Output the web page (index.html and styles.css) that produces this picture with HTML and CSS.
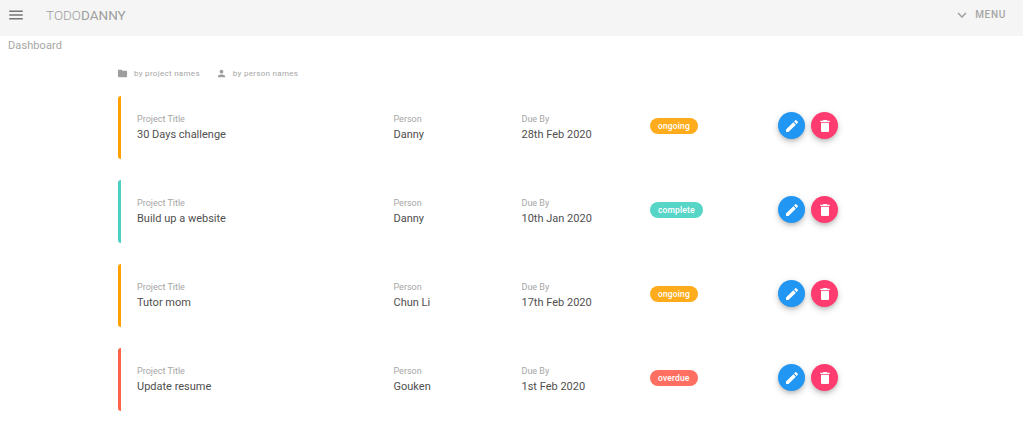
FILE: index.html
```html
<!DOCTYPE html>
<html lang="en">
<head>
    <meta charset="UTF-8">
    <title>TodoDanny</title>
    <link rel="stylesheet" href="styles.css">
</head>
<body>
    <!-- Toolbar -->
    <header class="toolbar">
        <svg class="menu-icon" viewBox="0 0 24 24"><path d="M3 18h18v-2H3v2zm0-5h18v-2H3v2zm0-7v2h18V6H3z"/></svg>
        <div class="brand"><span class="brand-light">TODO</span><span>DANNY</span></div>
        <div class="menu-btn">
            <svg class="chevron" viewBox="0 0 24 24"><path d="M7.41 8.59 12 13.17l4.59-4.58L18 10l-6 6-6-6z"/></svg>
            <span>MENU</span>
        </div>
    </header>

    <p class="page-title">Dashboard</p>

    <main class="container">
        <div class="filters">
            <div class="filter">
                <svg viewBox="0 0 24 24"><path d="M10 4H4c-1.1 0-2 .9-2 2v12c0 1.1.9 2 2 2h16c1.1 0 2-.9 2-2V8c0-1.1-.9-2-2-2h-8l-2-2z"/></svg>
                <span>by project names</span>
            </div>
            <div class="filter">
                <svg viewBox="0 0 24 24"><path d="M12 12c2.21 0 4-1.79 4-4s-1.79-4-4-4-4 1.79-4 4 1.79 4 4 4zm0 2c-2.67 0-8 1.34-8 4v2h16v-2c0-2.66-5.33-4-8-4z"/></svg>
                <span>by person names</span>
            </div>
        </div>

        <!-- Projects -->
        <div class="project ongoing">
            <div class="col"><div class="label">Project Title</div><div class="value">30 Days challenge</div></div>
            <div class="col"><div class="label">Person</div><div class="value">Danny</div></div>
            <div class="col"><div class="label">Due By</div><div class="value">28th Feb 2020</div></div>
            <div class="status"><span class="chip">ongoing</span></div>
            <div class="actions">
                <button class="fab edit"><svg viewBox="0 0 24 24"><path d="M3 17.25V21h3.75L17.81 9.94l-3.75-3.75L3 17.25zM20.71 7.04c.39-.39.39-1.02 0-1.41l-2.34-2.34c-.39-.39-1.02-.39-1.41 0l-1.83 1.83 3.75 3.75 1.83-1.83z"/></svg></button>
                <button class="fab delete"><svg viewBox="0 0 24 24"><path d="M6 19c0 1.1.9 2 2 2h8c1.1 0 2-.9 2-2V7H6v12zM19 4h-3.5l-1-1h-5l-1 1H5v2h14V4z"/></svg></button>
            </div>
        </div>

        <div class="project complete">
            <div class="col"><div class="label">Project Title</div><div class="value">Build up a website</div></div>
            <div class="col"><div class="label">Person</div><div class="value">Danny</div></div>
            <div class="col"><div class="label">Due By</div><div class="value">10th Jan 2020</div></div>
            <div class="status"><span class="chip">complete</span></div>
            <div class="actions">
                <button class="fab edit"><svg viewBox="0 0 24 24"><path d="M3 17.25V21h3.75L17.81 9.94l-3.75-3.75L3 17.25zM20.71 7.04c.39-.39.39-1.02 0-1.41l-2.34-2.34c-.39-.39-1.02-.39-1.41 0l-1.83 1.83 3.75 3.75 1.83-1.83z"/></svg></button>
                <button class="fab delete"><svg viewBox="0 0 24 24"><path d="M6 19c0 1.1.9 2 2 2h8c1.1 0 2-.9 2-2V7H6v12zM19 4h-3.5l-1-1h-5l-1 1H5v2h14V4z"/></svg></button>
            </div>
        </div>

        <div class="project ongoing">
            <div class="col"><div class="label">Project Title</div><div class="value">Tutor mom</div></div>
            <div class="col"><div class="label">Person</div><div class="value">Chun Li</div></div>
            <div class="col"><div class="label">Due By</div><div class="value">17th Feb 2020</div></div>
            <div class="status"><span class="chip">ongoing</span></div>
            <div class="actions">
                <button class="fab edit"><svg viewBox="0 0 24 24"><path d="M3 17.25V21h3.75L17.81 9.94l-3.75-3.75L3 17.25zM20.71 7.04c.39-.39.39-1.02 0-1.41l-2.34-2.34c-.39-.39-1.02-.39-1.41 0l-1.83 1.83 3.75 3.75 1.83-1.83z"/></svg></button>
                <button class="fab delete"><svg viewBox="0 0 24 24"><path d="M6 19c0 1.1.9 2 2 2h8c1.1 0 2-.9 2-2V7H6v12zM19 4h-3.5l-1-1h-5l-1 1H5v2h14V4z"/></svg></button>
            </div>
        </div>

        <div class="project overdue">
            <div class="col"><div class="label">Project Title</div><div class="value">Update resume</div></div>
            <div class="col"><div class="label">Person</div><div class="value">Gouken</div></div>
            <div class="col"><div class="label">Due By</div><div class="value">1st Feb 2020</div></div>
            <div class="status"><span class="chip">overdue</span></div>
            <div class="actions">
                <button class="fab edit"><svg viewBox="0 0 24 24"><path d="M3 17.25V21h3.75L17.81 9.94l-3.75-3.75L3 17.25zM20.71 7.04c.39-.39.39-1.02 0-1.41l-2.34-2.34c-.39-.39-1.02-.39-1.41 0l-1.83 1.83 3.75 3.75 1.83-1.83z"/></svg></button>
                <button class="fab delete"><svg viewBox="0 0 24 24"><path d="M6 19c0 1.1.9 2 2 2h8c1.1 0 2-.9 2-2V7H6v12zM19 4h-3.5l-1-1h-5l-1 1H5v2h14V4z"/></svg></button>
            </div>
        </div>
    </main>
</body>
</html>
```

FILE: styles.css
```css
/* General Styles */
html, body {
    height: 441px;
    overflow: hidden;
}

body {
    font-family: Roboto, sans-serif;
    margin: 0;
    background: #fff;
    color: #424242;
}

/* Toolbar */
.toolbar {
    display: flex;
    align-items: center;
    height: 36px;
    padding: 0 17px 7px 7px;
    box-sizing: border-box;
    background: #f5f5f5;
}

.menu-icon {
    width: 18px;
    height: 18px;
    fill: #757575;
}

.brand {
    margin-left: 21px;
    font-size: 13.5px;
    font-weight: 400;
    color: #9e9e9e;
}

.brand-light {
    font-weight: 300;
}

.menu-btn {
    display: flex;
    align-items: center;
    gap: 4px;
    margin-left: auto;
    font-size: 10px;
    font-weight: 500;
    letter-spacing: 0.7px;
    color: #a6a6a6;
}

.chevron {
    width: 18px;
    height: 18px;
    fill: #9e9e9e;
}

.page-title {
    margin: 3px 0 0 8px;
    font-size: 11px;
    line-height: 14px;
    letter-spacing: 0.1px;
    color: #a6a6a6;
}

/* Main Content */
.container {
    width: 768px;
    margin-left: 117px;
}

.filters {
    display: flex;
    gap: 16px;
    height: 12px;
    margin-top: 14px;
    margin-bottom: 17px;
}

.filter {
    display: flex;
    align-items: center;
    gap: 6px;
    font-size: 8px;
    letter-spacing: 0.3px;
    color: #a6a6a6;
}

.filter svg {
    width: 11px;
    height: 11px;
    fill: #9e9e9e;
}

.project {
    display: grid;
    grid-template-columns: 256.5px 128px 128.5px 128px 1fr;
    align-items: center;
    height: 63px;
    margin-bottom: 21px;
    margin-left: 1px;
    padding-left: 16px;
    padding-bottom: 3px;
    box-sizing: border-box;
    border-left: 3px solid;
    border-radius: 3px;
}

.project.ongoing { border-left-color: #ffa000; }
.project.complete { border-left-color: #4dd0c4; }
.project.overdue { border-left-color: #ff6347; }

.col {
    padding-top: 3px;
}

.label {
    font-size: 9px;
    line-height: 12px;
    color: #a6a6a6;
}

.value {
    margin-top: 2px;
    font-size: 11px;
    line-height: 16px;
    color: #4f4f4f;
}

.status {
    display: flex;
}

.chip {
    height: 16px;
    padding: 0 8px;
    border-radius: 8px;
    font-size: 8.5px;
    font-weight: 500;
    line-height: 16px;
    letter-spacing: 0.15px;
    color: #fff;
}

.ongoing .chip { background: #ffac1c; }
.complete .chip { background: #57d6c8; }
.overdue .chip { background: #ff6f61; }

.actions {
    display: flex;
    gap: 6px;
    margin-top: -1px;
}

.fab {
    display: flex;
    align-items: center;
    justify-content: center;
    width: 27px;
    height: 27px;
    padding: 0;
    border: none;
    border-radius: 50%;
    box-shadow: 0 2px 4px -1px rgba(0, 0, 0, 0.2), 0 4px 6px 0 rgba(0, 0, 0, 0.1), 0 1px 10px 0 rgba(0, 0, 0, 0.08);
}

.fab svg {
    width: 16px;
    height: 16px;
    fill: #fff;
}

.fab.edit { background: #2196f3; }
.fab.delete { background: #ff3b6f; }
```
